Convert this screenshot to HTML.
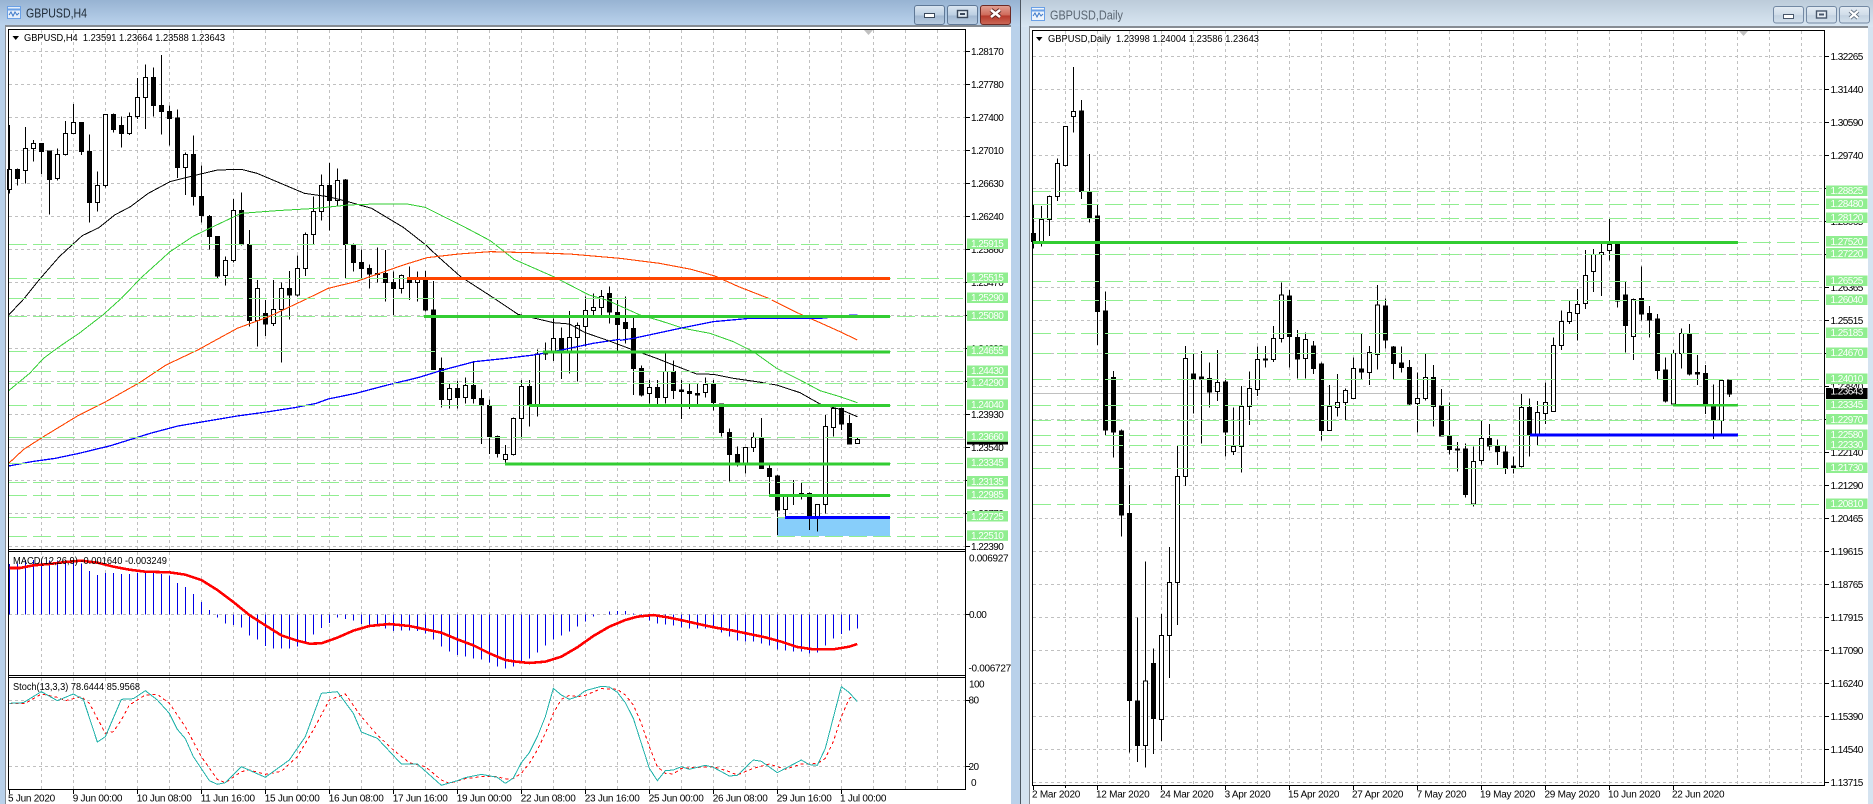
<!DOCTYPE html>
<html><head><meta charset="utf-8"><title>GBPUSD</title>
<style>
html,body{margin:0;padding:0;background:#fff;overflow:hidden}
svg{display:block;font-family:"Liberation Sans",sans-serif}
path,polyline,line{vector-effect:non-scaling-stroke}
polyline{fill:none;shape-rendering:crispEdges}
.g{fill:none;stroke:#c0c0c0;stroke-width:1;stroke-dasharray:3 3}
.l{fill:none;stroke:#90ee90;stroke-width:1;stroke-dasharray:18 6}
.w{fill:none;stroke:#000;stroke-width:1;shape-rendering:crispEdges}
.b{fill:#000;stroke:#000;stroke-width:1;shape-rendering:crispEdges}
.h{fill:#fff;stroke:#000;stroke-width:1;shape-rendering:crispEdges}
.a text,text.a{font-size:10px;letter-spacing:-.55px;fill:#000}
.n text{font-size:10px;letter-spacing:-.55px;fill:#fff}
.d text{font-size:10px;fill:#000}
.gl rect{fill:#90ee90}
text{white-space:pre}
</style></head><body>
<svg width="1873" height="804" viewBox="0 0 1873 804" xmlns="http://www.w3.org/2000/svg">
<defs>
<linearGradient id="t1" x1="0" y1="0" x2="0" y2="1"><stop offset="0" stop-color="#97b3d2"/><stop offset="1" stop-color="#bbd3ec"/></linearGradient>
<linearGradient id="t2" x1="0" y1="0" x2="0" y2="1"><stop offset="0" stop-color="#bccbda"/><stop offset="1" stop-color="#d9e6f2"/></linearGradient>
<linearGradient id="bt" x1="0" y1="0" x2="0" y2="1"><stop offset="0" stop-color="#dbe6f1"/><stop offset=".5" stop-color="#bccfe3"/><stop offset=".55" stop-color="#a3b9d2"/><stop offset="1" stop-color="#b9cde2"/></linearGradient>
<linearGradient id="bi" x1="0" y1="0" x2="0" y2="1"><stop offset="0" stop-color="#e4ecf4"/><stop offset=".5" stop-color="#d0dde9"/><stop offset=".55" stop-color="#c3d2e1"/><stop offset="1" stop-color="#d3e0ec"/></linearGradient>
<linearGradient id="bc" x1="0" y1="0" x2="0" y2="1"><stop offset="0" stop-color="#e2a295"/><stop offset=".5" stop-color="#cf6a5a"/><stop offset=".55" stop-color="#b73a2c"/><stop offset="1" stop-color="#cc6a58"/></linearGradient>
</defs>

<!-- window frames -->
<rect x="0" y="0" width="1020" height="804" fill="#b9d1ea"/>
<rect x="0" y="0" width="1020" height="26" fill="url(#t1)"/>
<rect x="1021" y="0" width="852" height="804" fill="#d5e3f0"/>
<rect x="1021" y="0" width="852" height="27" fill="url(#t2)"/>
<rect x="1020" y="0" width="1" height="804" fill="#4d5660"/>
<rect x="6" y="27" width="1005" height="777" fill="#fff"/>
<rect x="1030" y="28" width="838" height="776" fill="#fff"/>
<rect x="5" y="25" width="1006" height="2" fill="#868c93"/>
<rect x="5" y="25" width="1" height="779" fill="#868c93"/>
<rect x="1029" y="26" width="839" height="2" fill="#868c93"/>
<rect x="1029" y="26" width="1" height="778" fill="#868c93"/>

<!-- titles -->
<g>
<rect x="7.5" y="6.5" width="13" height="12" fill="#e6effa" stroke="#6aa0e6"/>
<path d="M8 9.5H20" stroke="#6aa0e6" fill="none" stroke-width="2"/>
<path d="M9 15l2-3 2 4 2-4 2 3 2-2" stroke="#3c78c8" fill="none"/>
<text x="26" y="17.5" font-size="13" fill="#1e2a36" textLength="61" lengthAdjust="spacingAndGlyphs">GBPUSD,H4</text>
<rect x="1031.5" y="7.5" width="13" height="13" fill="#eef4fb" stroke="#6aa0e6"/>
<path d="M1032 10.5H1044" stroke="#6aa0e6" fill="none" stroke-width="2"/>
<path d="M1033 16l2-3 2 4 2-4 2 3 2-2" stroke="#3c78c8" fill="none"/>
<text x="1050" y="19.5" font-size="13" fill="#5a6672" textLength="73" lengthAdjust="spacingAndGlyphs">GBPUSD,Daily</text>
</g>

<!-- buttons -->
<rect x="914.5" y="5.5" width="30" height="19" rx="2.5" fill="url(#bt)" stroke="#5f7896"/>
<rect x="924.5" y="13.5" width="10" height="4" fill="#fff" stroke="#39475a"/>
<rect x="947.5" y="5.5" width="30" height="19" rx="2.5" fill="url(#bt)" stroke="#5f7896"/>
<rect x="957.5" y="10.5" width="10" height="7" fill="#dfe8f1" stroke="#39475a" stroke-width="1.4"/>
<rect x="960" y="13" width="5" height="2" fill="#39475a"/>
<rect x="980.5" y="5.5" width="30" height="19" rx="2.5" fill="url(#bc)" stroke="#6d2a25"/>
<path d="M991 10l9 7M1000 10l-9 7" stroke="#5b2320" stroke-width="4.5" fill="none"/>
<path d="M991 10l9 7M1000 10l-9 7" stroke="#fff" stroke-width="2.6" fill="none"/>

<rect x="1773.5" y="6.5" width="30" height="16.5" rx="2.5" fill="url(#bi)" stroke="#7288a3"/>
<rect x="1783.5" y="14.5" width="10" height="4" fill="#fff" stroke="#47566a"/>
<rect x="1806.5" y="6.5" width="30" height="16.5" rx="2.5" fill="url(#bi)" stroke="#7288a3"/>
<rect x="1816.5" y="11" width="10" height="7" fill="#e8eef5" stroke="#47566a" stroke-width="1.4"/>
<rect x="1819" y="13.5" width="5" height="2" fill="#47566a"/>
<rect x="1839.5" y="6.5" width="30" height="16.5" rx="2.5" fill="url(#bi)" stroke="#7288a3"/>
<path d="M1850 11l8 7M1858 11l-8 7" stroke="#5d6b7c" stroke-width="4" fill="none"/>
<path d="M1850 11l8 7M1858 11l-8 7" stroke="#fff" stroke-width="2.2" fill="none"/>

<!-- LEFT grid -->
<path class="g" d="M41.5 30V789M73.5 30V789M105.5 30V789M137.5 30V789M169.5 30V789M201.5 30V789M233.5 30V789M265.5 30V789M297.5 30V789M329.5 30V789M361.5 30V789M393.5 30V789M425.5 30V789M457.5 30V789M489.5 30V789M521.5 30V789M553.5 30V789M585.5 30V789M617.5 30V789M649.5 30V789M681.5 30V789M713.5 30V789M745.5 30V789M777.5 30V789M809.5 30V789M841.5 30V789M873.5 30V789M905.5 30V789M937.5 30V789"/>
<path class="g" d="M9 51.5H965M9 84.5H965M9 117.5H965M9 150.5H965M9 183.5H965M9 216.5H965M9 249.5H965M9 282.5H965M9 315.5H965M9 348.5H965M9 381.5H965M9 414.5H965M9 447.5H965M9 480.5H965M9 513.5H965M9 546.5H965M9 614.5H965M9 700.5H965M9 766.5H965"/>
<path d="M9 439.5H965" stroke="#c0c0c0" fill="none"/>
<rect x="777.5" y="517" width="112.500" height="19" fill="#87cefa"/>

<!-- LEFT candles -->
<g transform="translate(9.5,0) scale(8,.33333)">
<path class="w" d="M0 375V580M1 505V557M2 381V551M3 420V485M4 430V522M5 453V644M6 445V542M7 363V467M8 312V402M9 367V465M10 403V668M11 514V635M12 342V563M13 340V398M14 350V443M15 338V405M16 234V357M17 193V387M18 202V350M19 165V404M20 316V437M21 328V534M22 458V585M23 406V617M24 497V668M25 645V748M26 708V835M27 770V857M28 597V788M29 577V737M30 690V980M31 840V1040M32 900V1008M33 840V978M34 848V1088M35 813V958M36 767V890M37 697V828M38 590V732M39 523V662M40 489V692M41 505V620M42 537V835M43 730V815M44 748V835M45 793V865M46 742V848M47 750V905M48 815V945M49 823V880M50 800V900M51 815V905M52 813V935M53 843V1110M54 1072V1223M55 1150V1225M56 1143V1225M57 1132V1210M58 1083V1210M59 1168V1332M60 1198V1362M61 1307V1372M62 1335V1392M63 1252V1366M64 1140V1315M65 1140V1280M66 1048V1250M67 1028V1080M68 955V1083M69 982V1137M70 933V1120M71 967V1145M72 890V1040M73 880V945M74 870V945M75 860V970M76 900V1052M77 890V1030M78 945V1185M79 1097V1190M80 1140V1210M81 1140V1212M82 1058V1210M83 1082V1197M84 1140V1257M85 1152V1227M86 1150V1212M87 1132V1192M88 1140V1232M89 1210V1310M90 1285V1445M91 1340V1400M92 1342V1420M93 1297V1356M94 1254V1406M95 1390V1485M96 1425V1605M97 1490V1552M98 1440V1515M99 1448V1498M100 1478V1590M101 1514V1595M102 1245V1540M103 1220V1310M104 1222V1290M105 1245V1334M106 1314V1332"/>
</g>
<g transform="translate(7.5,0) scale(8,.33333)">
<path class="b" d="M1 508h.5V535h-.5zM4 430h.5V455h-.5zM5 453h.5V539h-.5zM9 367h.5V455h-.5zM10 454h.5V608h-.5zM13 343h.5V389h-.5zM14 376h.5V401h-.5zM18 232h.5V317h-.5zM19 316h.5V335h-.5zM20 334h.5V356h-.5zM21 354h.5V503h-.5zM23 464h.5V589h-.5zM24 589h.5V647h-.5zM25 649h.5V710h-.5zM26 709h.5V828h-.5zM29 631h.5V732h-.5zM30 733h.5V962h-.5zM32 940h.5V972h-.5zM35 865h.5V885h-.5zM40 556h.5V602h-.5zM42 540h.5V733h-.5zM43 735h.5V788h-.5zM44 787h.5V806h-.5zM45 805h.5V822h-.5zM46 820h.5V823h-.5zM47 820h.5V848h-.5zM48 847h.5V866h-.5zM50 832h.5V848h-.5zM52 840h.5V930h-.5zM53 930h.5V1108h-.5zM54 1105h.5V1198h-.5zM56 1165h.5V1193h-.5zM58 1156h.5V1195h-.5zM59 1195h.5V1215h-.5zM60 1217h.5V1310h-.5zM61 1310h.5V1360h-.5zM65 1159h.5V1215h-.5zM67 1055h.5V1062h-.5zM69 1015h.5V1053h-.5zM75 880h.5V936h-.5zM76 937h.5V974h-.5zM77 968h.5V986h-.5zM78 985h.5V1105h-.5zM79 1105h.5V1185h-.5zM81 1162h.5V1192h-.5zM83 1115h.5V1172h-.5zM84 1170h.5V1175h-.5zM85 1174h.5V1181h-.5zM86 1181h.5V1185h-.5zM88 1153h.5V1207h-.5zM89 1212h.5V1298h-.5zM90 1297h.5V1364h-.5zM91 1363h.5V1389h-.5zM94 1314h.5V1406h-.5zM95 1405h.5V1430h-.5zM96 1428h.5V1530h-.5zM98 1485h.5V1490h-.5zM99 1480h.5V1483h-.5zM100 1480h.5V1555h-.5zM104 1225h.5V1272h-.5zM105 1270h.5V1332h-.5z"/>
<path class="h" d="M0 508h.5V568h-.5zM2 446h.5V511h-.5zM3 431h.5V445h-.5zM6 463h.5V536h-.5zM7 401h.5V463h-.5zM8 367h.5V400h-.5zM11 556h.5V607h-.5zM12 343h.5V556h-.5zM15 349h.5V400h-.5zM16 292h.5V349h-.5zM17 232h.5V292h-.5zM22 464h.5V502h-.5zM27 781h.5V827h-.5zM28 631h.5V781h-.5zM31 865h.5V962h-.5zM33 928h.5V970h-.5zM34 865h.5V928h-.5zM36 805h.5V885h-.5zM37 703h.5V805h-.5zM38 634h.5V703h-.5zM39 556h.5V634h-.5zM41 541h.5V601h-.5zM49 827h.5V866h-.5zM51 835h.5V848h-.5zM55 1165h.5V1198h-.5zM57 1156h.5V1193h-.5zM62 1363h.5V1378h-.5zM63 1255h.5V1363h-.5zM64 1159h.5V1255h-.5zM66 1062h.5V1215h-.5zM68 1015h.5V1055h-.5zM70 1012h.5V1053h-.5zM71 976h.5V1012h-.5zM72 931h.5V980h-.5zM73 922h.5V932h-.5zM74 890h.5V922h-.5zM80 1162h.5V1180h-.5zM82 1115h.5V1192h-.5zM87 1153h.5V1178h-.5zM92 1342h.5V1390h-.5zM93 1312h.5V1342h-.5zM97 1490h.5V1528h-.5zM101 1514h.5V1550h-.5zM102 1280h.5V1513h-.5zM103 1225h.5V1282h-.5zM106 1318h.5V1330h-.5z"/>
</g>

<!-- LEFT moving averages -->
<g transform="scale(.3954,.33333)">
<polyline stroke="#000" stroke-width="1" points="22,945 60,897 100,838 150,770 208,707 250,683 290,645 330,620 375,580 430,545 490,527 550,510 610,508 650,520 700,545 770,580 830,590 880,605 940,625 1020,682 1075,733 1110,772 1165,830 1250,895 1310,943 1400,968 1440,972 1480,998 1534,1020"/>
<polyline stroke="#32cd32" stroke-width="1" points="22,1172 75,1120 110,1075 150,1040 200,1000 260,945 305,897 360,830 430,755 490,708 530,685 610,640 700,632 800,625 880,615 950,612 1030,612 1075,622 1170,678 1240,722 1300,778 1400,830 1490,885 1534,900"/>
<polyline stroke="#ff4500" stroke-width="1.1" points="22,1390 60,1348 110,1310 200,1245 260,1210 350,1150 420,1095 500,1050 600,985 680,950 775,897 830,865 900,845 960,820 1020,795 1080,773 1160,762 1240,755 1340,758 1440,762 1568,775 1668,790 1748,808 1808,828 1868,860 1948,897"/>
<polyline stroke="#0000ff" stroke-width="1.3" points="22,1398 80,1385 140,1375 200,1360 280,1337 380,1300 450,1278 530,1262 600,1248 680,1235 750,1222 800,1210 830,1197 900,1180 980,1155 1060,1132 1120,1110 1200,1085 1280,1075 1350,1065 1420,1050 1500,1030 1568,1018"/>
</g>
<g transform="translate(500,300) scale(.33333)">
<polyline stroke="#000" stroke-width="1" points="320,120 400,150 470,175 520,195 590,222 640,223 700,235 770,245 830,255 900,278 960,312 1020,328 1072,350"/>
<polyline stroke="#32cd32" stroke-width="1" points="320,0 420,45 480,62 550,85 630,100 700,125 760,155 830,205 900,240 960,272 1020,290 1072,308"/>
<polyline stroke="#ff4500" stroke-width="1.1" points="815,0 900,42 960,68 1020,95 1072,120"/>
<polyline stroke="#0000ff" stroke-width="1.3" points="360,121 400,115 540,85 640,65 750,55 960,55 1060,45 1072,45"/>
</g>

<!-- LEFT levels -->
<path class="l" d="M9 244.500H963M9 278.500H963M9 298.500H963M9 316.500H963M9 351.500H963M9 371.500H963M9 383.500H963M9 405.500H963M9 437.500H963M9 463.500H963M9 482.500H963M9 495.500H963M9 517.500H963M9 536.500H963"/>
<rect x="407" y="277" width="483" height="3" fill="#ff4500"/>
<rect x="424" y="315" width="466" height="3" fill="#32cd32"/>
<rect x="543" y="350.500" width="347" height="3" fill="#32cd32"/>
<rect x="529" y="404" width="361" height="3" fill="#32cd32"/>
<rect x="505" y="462.500" width="385" height="3" fill="#32cd32"/>
<rect x="769" y="494" width="121" height="3" fill="#32cd32"/>
<rect x="785" y="516" width="105" height="3" fill="#0000ff"/>

<!-- LEFT indicators -->
<g transform="translate(9.5,540) scale(8,.33333)" >
<path fill="none" stroke="#0000e6" shape-rendering="crispEdges" d="M0 223V72M1 223V70M2 223V60M3 223V60M4 223V65M5 223V62M6 223V62M7 223V62M8 223V62M9 223V70M10 223V93M11 223V105M12 223V99M13 223V99M14 223V102M15 223V102M16 223V99M17 223V97M18 223V99M19 223V102M20 223V107M21 223V129M22 223V141M23 223V162M24 223V186M25 223V210M26 223V233M27 223V251M28 223V255M29 223V263M30 223V287M31 223V299M32 223V318M33 223V326M34 223V326M35 223V326M36 223V320M37 223V304M38 223V284M39 223V264M40 223V249M41 223V233M42 223V237M43 223V242M44 223V252M45 223V256M46 223V258M47 223V266M48 223V273M49 223V272M50 223V272M51 223V273M52 223V280M53 223V299M54 223V320M55 223V335M56 223V345M57 223V350M58 223V355M59 223V359M60 223V368M61 223V380M62 223V386M63 223V380M64 223V368M65 223V356M66 223V338M67 223V317M68 223V299M69 223V287M70 223V275M71 223V260M72 223V245M73 223V230M74 223V224M75 223V215M76 223V213M77 223V213M78 223V221M79 223V228M80 223V242M81 223V250M82 223V254M83 223V257M84 223V263M85 223V266M86 223V266M87 223V266M88 223V266M89 223V277M90 223V290M91 223V302M92 223V305M93 223V305M94 223V311M95 223V317M96 223V329M97 223V332M98 223V335M99 223V335M100 223V341M101 223V338M102 223V317M103 223V296M104 223V282M105 223V272M106 223V266"/>
</g>
<g transform="translate(0,540) scale(.33333)">
<polyline stroke="#ff0000" stroke-width="2.6" points="28,84 60,84 100,76 148,72 196,66 244,62 292,68 340,80 388,89 436,95 508,97 556,104 604,120 652,150 700,186 748,225 796,256 844,286 892,302 928,311 964,310 1012,293 1060,272 1108,258 1168,252 1228,258 1276,268 1324,278 1372,298 1420,316 1468,340 1516,360"/>
<polyline stroke="#ff0000" stroke-width="1" stroke-dasharray="3 3" points="28,491 76,490 124,462 172,472 196,482 244,470 268,490 316,580 340,575 364,540 388,495 436,465 472,463 508,490 556,560 604,650 652,718 676,728 724,695 748,690 796,703 844,694 892,650 940,570 988,480 1036,462 1084,530 1132,585 1180,630 1228,668 1276,680 1324,720 1348,730 1396,716 1444,710 1492,710 1516,717"/>
<polyline stroke="#20b2aa" stroke-width="1" points="28,490 70,488 124,455 172,482 220,462 250,478 292,606 316,590 364,478 400,476 436,452 472,480 508,520 532,568 556,596 580,650 628,722 652,733 676,728 724,680 796,712 868,660 916,590 964,460 1012,455 1060,520 1084,576 1132,595 1204,672 1252,672 1324,736 1372,722 1396,713 1444,703 1492,712 1516,730"/>
</g>
<g transform="translate(500,540) scale(.33333)">
<polyline stroke="#ff0000" stroke-width="2.6" points="16,360 40,364 88,369 136,365 184,350 232,322 280,288 328,260 376,240 412,230 460,225 508,233 556,243 604,254 652,264 700,272 748,282 796,292 844,305 892,321 940,328 1000,328 1048,320 1072,312"/>
<polyline stroke="#ff0000" stroke-width="1" stroke-dasharray="3 3" points="16,717 40,715 64,700 88,670 112,630 136,580 160,520 184,478 208,466 232,470 256,466 304,446 352,448 376,465 400,495 424,550 448,620 472,680 496,700 520,702 544,685 592,682 640,680 688,695 712,705 760,685 808,672 856,688 904,672 952,671 976,655 1000,605 1024,530 1048,475 1060,468"/>
<polyline stroke="#20b2aa" stroke-width="1" points="16,730 40,714 64,668 88,638 112,590 136,530 160,445 184,465 208,478 232,470 256,452 304,439 328,441 352,457 376,488 400,535 424,610 448,685 472,722 496,692 520,690 544,680 568,688 616,676 640,682 688,708 712,706 760,660 784,664 832,698 904,660 928,674 952,676 976,625 1024,440 1048,458 1072,485"/>
</g>

<!-- LEFT frame lines -->
<path fill="none" stroke="#000" d="M8.500 29.500H965.500V789.500H8.500ZM8.500 549.500H965.500M8.500 551.500H965.500M8.500 675.500H965.500M8.500 677.500H965.500"/>
<path fill="none" stroke="#000" d="M966 51.500h4M966 84.500h4M966 117.500h4M966 150.500h4M966 183.500h4M966 216.500h4M966 249.500h4M966 282.500h4M966 315.500h4M966 348.500h4M966 381.500h4M966 414.500h4M966 447.500h4M966 480.500h4M966 513.500h4M966 546.500h4M966 614.500h4M966 700.500h4M966 766.500h4M9.500 790v4M73.500 790v4M137.500 790v4M201.500 790v4M265.500 790v4M329.500 790v4M393.500 790v4M457.500 790v4M521.500 790v4M585.500 790v4M649.500 790v4M713.500 790v4M777.500 790v4M841.500 790v4"/>
<path d="M864 30h9l-4.500 5z" fill="#c0c0c0"/>
<path d="M12.500 36h6.500l-3.250 4z" fill="#000"/>
<text x="24" y="41" font-size="10" fill="#000" textLength="201" lengthAdjust="spacingAndGlyphs">GBPUSD,H4  1.23591 1.23664 1.23588 1.23643</text>
<text x="13" y="564" font-size="10" fill="#000" textLength="154" lengthAdjust="spacingAndGlyphs">MACD(12,26,9) -0.001640 -0.003249</text>
<text x="13" y="690" font-size="10" fill="#000" textLength="127" lengthAdjust="spacingAndGlyphs">Stoch(13,3,3) 78.6444 85.9568</text>

<!-- LEFT axis -->
<g class="a">
<text x="971" y="55">1.28170</text><text x="971" y="88">1.27780</text><text x="971" y="121">1.27400</text><text x="971" y="154">1.27010</text><text x="971" y="187">1.26630</text><text x="971" y="220">1.26240</text><text x="971" y="253">1.25860</text><text x="971" y="286">1.25470</text><text x="971" y="352">1.24690</text><text x="971" y="418">1.23930</text><text x="971" y="451">1.23540</text><text x="971" y="517">1.22770</text><text x="971" y="550">1.22390</text>
<text x="969" y="561.500" style="letter-spacing:-.3px">0.006927</text><text x="969" y="618">0.00</text><text x="968.500" y="671.500" style="letter-spacing:-.3px">-0.006727</text>
<text x="969" y="687.500">100</text><text x="968.500" y="703.500">80</text><text x="968.500" y="770">20</text><text x="971" y="786">0</text>
</g>
<rect x="967" y="434" width="41" height="10.500" fill="#000"/>
<g class="gl">
<rect x="967" y="238.500" width="41" height="10.500"/><rect x="967" y="272.500" width="41" height="10.500"/><rect x="967" y="292.500" width="41" height="10.500"/><rect x="967" y="310.500" width="41" height="10.500"/><rect x="967" y="345.700" width="41" height="10.500"/><rect x="967" y="365.500" width="41" height="10.500"/><rect x="967" y="377.500" width="41" height="10.500"/><rect x="967" y="399.500" width="41" height="10.500"/><rect x="967" y="431.300" width="41" height="10.500"/><rect x="967" y="457.700" width="41" height="10.500"/><rect x="967" y="476" width="41" height="10.500"/><rect x="967" y="489" width="41" height="10.500"/><rect x="967" y="511" width="41" height="10.500"/><rect x="967" y="530.300" width="41" height="10.500"/>
</g>
<g class="n">
<text x="971" y="247">1.25915</text><text x="971" y="281">1.25515</text><text x="971" y="301">1.25290</text><text x="971" y="319">1.25080</text><text x="971" y="354">1.24655</text><text x="971" y="374">1.24430</text><text x="971" y="386">1.24290</text><text x="971" y="408">1.24040</text><text x="971" y="440">1.23660</text><text x="971" y="466">1.23345</text><text x="971" y="485">1.23135</text><text x="971" y="498">1.22985</text><text x="971" y="520">1.22725</text><text x="971" y="539">1.22510</text>
</g>
<g class="d" style="letter-spacing:-.25px">
<text x="8" y="801.500">5 Jun 2020</text><text x="72.700" y="801.500">9 Jun 00:00</text><text x="136.700" y="801.500">10 Jun 08:00</text><text x="200.700" y="801.500">11 Jun 16:00</text><text x="264.700" y="801.500">15 Jun 00:00</text><text x="328.700" y="801.500">16 Jun 08:00</text><text x="392.700" y="801.500">17 Jun 16:00</text><text x="456.700" y="801.500">19 Jun 00:00</text><text x="520.700" y="801.500">22 Jun 08:00</text><text x="584.700" y="801.500">23 Jun 16:00</text><text x="648.700" y="801.500">25 Jun 00:00</text><text x="712.700" y="801.500">26 Jun 08:00</text><text x="776.700" y="801.500">29 Jun 16:00</text><text x="840" y="801.500">1 Jul 00:00</text>
</g>

<!-- RIGHT grid -->
<path class="g" d="M1065.500 31V786M1097.500 31V786M1129.500 31V786M1161.500 31V786M1193.500 31V786M1225.500 31V786M1257.500 31V786M1289.500 31V786M1321.500 31V786M1353.500 31V786M1385.500 31V786M1417.500 31V786M1449.500 31V786M1481.500 31V786M1513.500 31V786M1545.500 31V786M1577.500 31V786M1609.500 31V786M1641.500 31V786M1673.500 31V786M1705.500 31V786M1737.500 31V786M1769.500 31V786M1801.500 31V786"/>
<path class="g" d="M1033 56.500H1824M1033 89.500H1824M1033 122.500H1824M1033 155.500H1824M1033 188.500H1824M1033 221.500H1824M1033 254.500H1824M1033 287.500H1824M1033 320.500H1824M1033 353.500H1824M1033 386.500H1824M1033 419.500H1824M1033 452.500H1824M1033 485.500H1824M1033 518.500H1824M1033 551.500H1824M1033 584.500H1824M1033 617.500H1824M1033 650.500H1824M1033 683.500H1824M1033 716.500H1824M1033 749.500H1824M1033 782.500H1824"/>
<path d="M1033 393.500H1824" stroke="#c0c0c0" fill="none"/>

<!-- RIGHT candles -->
<g transform="translate(1033.5,0) scale(8,.33333)">
<path class="w" d="M0 615V745M1 618V740M2 587V708M3 475V603M4 379V500M5 201V398M6 300V597M7 462V668M8 615V1035M9 875V1305M10 1113V1373M11 1288V1610M12 1455V2258M13 1852V2286M14 1685V2303M15 1945V2262M16 1842V2223M17 1641V2034M18 1337V1875M19 1038V1458M20 1060V1240M21 1053V1330M22 1088V1223M23 1050V1203M24 1135V1370M25 1223V1365M26 1158V1418M27 1115V1275M28 1040V1188M29 1038V1103M30 978V1086M31 848V1028M32 870V1103M33 990V1135M34 997V1135M35 1023V1122M36 1088V1322M37 1155V1292M38 1122V1250M39 1166V1260M40 1073V1196M41 1000V1137M42 1038V1155M43 855V1108M44 895V1045M45 1038V1137M46 1040V1118M47 1080V1215M48 1118V1298M49 1060V1202M50 1095V1280M51 1167V1310M52 1208V1363M53 1326V1415M54 1330V1493M55 1340V1520M56 1262V1394M57 1272V1352M58 1318V1395M59 1338V1422M60 1370V1420M61 1182V1403M62 1195V1370M63 1203V1336M64 1147V1272M65 1013V1235M66 932V1050M67 900V972M68 867V1022M69 750V927M70 747V876M71 732V888M72 657V782M73 732V923M74 845V1057M75 895V1080M76 800V962M77 918V1013M78 942V1137M79 1073V1208M80 1050V1215M81 985V1105M82 972V1126M83 1065V1155M84 1095V1242M85 1153V1317M86 1141V1302M87 1140V1191"/>
</g>
<g transform="translate(1031.5,0) scale(8,.33333)">
<path class="b" d="M0 700h.5V725h-.5zM6 333h.5V575h-.5zM7 575h.5V652h-.5zM8 648h.5V935h-.5zM9 933h.5V1290h-.5zM10 1132h.5V1296h-.5zM11 1293h.5V1545h-.5zM12 1540h.5V2102h-.5zM13 2103h.5V2237h-.5zM15 1990h.5V2155h-.5zM20 1122h.5V1137h-.5zM21 1131h.5V1137h-.5zM22 1135h.5V1176h-.5zM24 1146h.5V1296h-.5zM29 1077h.5V1080h-.5zM32 888h.5V1010h-.5zM33 1012h.5V1077h-.5zM35 1038h.5V1106h-.5zM36 1092h.5V1292h-.5zM41 1107h.5V1116h-.5zM44 918h.5V1020h-.5zM45 1041h.5V1091h-.5zM46 1089h.5V1103h-.5zM47 1102h.5V1212h-.5zM50 1132h.5V1220h-.5zM51 1218h.5V1308h-.5zM52 1308h.5V1349h-.5zM53 1347h.5V1350h-.5zM54 1347h.5V1484h-.5zM57 1315h.5V1338h-.5zM58 1338h.5V1355h-.5zM59 1356h.5V1405h-.5zM60 1398h.5V1403h-.5zM62 1222h.5V1305h-.5zM73 732h.5V903h-.5zM74 885h.5V977h-.5zM76 895h.5V942h-.5zM77 940h.5V960h-.5zM78 957h.5V1112h-.5zM79 1110h.5V1203h-.5zM82 1002h.5V1122h-.5zM83 1118h.5V1122h-.5zM84 1120h.5V1213h-.5zM85 1215h.5V1260h-.5zM87 1140h.5V1182h-.5z"/>
<path class="h" d="M1 658h.5V725h-.5zM2 590h.5V658h-.5zM3 490h.5V590h-.5zM4 379h.5V497h-.5zM5 334h.5V350h-.5zM14 2043h.5V2237h-.5zM16 1907h.5V2158h-.5zM17 1747h.5V1907h-.5zM18 1429h.5V1748h-.5zM19 1075h.5V1430h-.5zM23 1147h.5V1175h-.5zM25 1340h.5V1355h-.5zM26 1219h.5V1339h-.5zM27 1165h.5V1220h-.5zM28 1078h.5V1169h-.5zM30 1015h.5V1079h-.5zM31 885h.5V1016h-.5zM34 1018h.5V1076h-.5zM37 1219h.5V1291h-.5zM38 1207h.5V1222h-.5zM39 1171h.5V1207h-.5zM40 1105h.5V1196h-.5zM42 1057h.5V1118h-.5zM43 915h.5V1063h-.5zM48 1196h.5V1210h-.5zM49 1132h.5V1196h-.5zM55 1384h.5V1512h-.5zM56 1315h.5V1382h-.5zM61 1222h.5V1400h-.5zM63 1237h.5V1305h-.5zM64 1207h.5V1240h-.5zM65 1036h.5V1235h-.5zM66 964h.5V1037h-.5zM67 937h.5V965h-.5zM68 913h.5V940h-.5zM69 826h.5V910h-.5zM70 764h.5V815h-.5zM71 757h.5V763h-.5zM72 733h.5V752h-.5zM75 898h.5V1010h-.5zM80 1060h.5V1212h-.5zM81 1000h.5V1060h-.5zM86 1141h.5V1262h-.5z"/>
</g>

<!-- RIGHT levels -->
<path class="l" d="M1033 191.500H1820M1033 204.500H1820M1033 218.500H1820M1033 242.500H1820M1033 254.500H1820M1033 281.500H1820M1033 300.500H1820M1033 333.500H1820M1033 353.500H1820M1033 379.500H1820M1033 405.500H1820M1033 420.500H1820M1033 435.500H1820M1033 445.500H1820M1033 468.500H1820M1033 504.500H1820"/>
<rect x="1033" y="241" width="705" height="3" fill="#32cd32"/>
<rect x="1673" y="404" width="65" height="2.500" fill="#32cd32"/>
<rect x="1530" y="433.500" width="208" height="3" fill="#0000ff"/>

<!-- RIGHT frame -->
<path fill="none" stroke="#000" d="M1032.500 30.500H1824.500V785.500H1032.500Z"/>
<path fill="none" stroke="#000" d="M1825 56.500h4M1825 89.500h4M1825 122.500h4M1825 155.500h4M1825 188.500h4M1825 221.500h4M1825 254.500h4M1825 287.500h4M1825 320.500h4M1825 353.500h4M1825 386.500h4M1825 419.500h4M1825 452.500h4M1825 485.500h4M1825 518.500h4M1825 551.500h4M1825 584.500h4M1825 617.500h4M1825 650.500h4M1825 683.500h4M1825 716.500h4M1825 749.500h4M1825 782.500h4M1033.500 786v4M1065.500 786v2M1097.500 786v4M1161.500 786v4M1225.500 786v4M1289.500 786v4M1353.500 786v4M1417.500 786v4M1481.500 786v4M1545.500 786v4M1609.500 786v4M1673.500 786v4"/>
<path d="M1739 31h9l-4.500 5z" fill="#c0c0c0"/>
<path d="M1036 37h6.500l-3.250 4z" fill="#000"/>
<text x="1048" y="42" font-size="10" fill="#000" textLength="211" lengthAdjust="spacingAndGlyphs">GBPUSD,Daily  1.23998 1.24004 1.23586 1.23643</text>

<!-- RIGHT axis -->
<g class="a">
<text x="1830.500" y="60">1.32265</text><text x="1830.500" y="93">1.31440</text><text x="1830.500" y="126">1.30590</text><text x="1830.500" y="159">1.29740</text><text x="1830.500" y="225">1.28065</text><text x="1830.500" y="291">1.26365</text><text x="1830.500" y="324">1.25515</text><text x="1830.500" y="390">1.23840</text><text x="1830.500" y="456">1.22140</text><text x="1830.500" y="489">1.21290</text><text x="1830.500" y="522">1.20465</text><text x="1830.500" y="555">1.19615</text><text x="1830.500" y="588">1.18765</text><text x="1830.500" y="621">1.17915</text><text x="1830.500" y="654">1.17090</text><text x="1830.500" y="687">1.16240</text><text x="1830.500" y="720">1.15390</text><text x="1830.500" y="753">1.14540</text><text x="1830.500" y="786">1.13715</text>
</g>
<rect x="1826" y="388" width="41.500" height="11" fill="#000"/>
<g class="gl">
<rect x="1826" y="185.500" width="41.500" height="10.500"/><rect x="1826" y="198.500" width="41.500" height="10.500"/><rect x="1826" y="212.500" width="41.500" height="10.500"/><rect x="1826" y="236" width="41.500" height="10.500"/><rect x="1826" y="248" width="41.500" height="10.500"/><rect x="1826" y="275.500" width="41.500" height="10.500"/><rect x="1826" y="294.500" width="41.500" height="10.500"/><rect x="1826" y="327.500" width="41.500" height="10.500"/><rect x="1826" y="347.500" width="41.500" height="10.500"/><rect x="1826" y="373.500" width="41.500" height="10.500"/><rect x="1826" y="399.500" width="41.500" height="10.500"/><rect x="1826" y="414" width="41.500" height="10.500"/><rect x="1826" y="429.500" width="41.500" height="10.500"/><rect x="1826" y="439.500" width="41.500" height="10.500"/><rect x="1826" y="462.500" width="41.500" height="10.500"/><rect x="1826" y="498.500" width="41.500" height="10.500"/>
</g>
<g class="n">
<text x="1830.500" y="394.500">1.23643</text>
<text x="1830.500" y="194">1.28825</text><text x="1830.500" y="207">1.28480</text><text x="1830.500" y="221">1.28120</text><text x="1830.500" y="245">1.27520</text><text x="1830.500" y="257">1.27220</text><text x="1830.500" y="284">1.26525</text><text x="1830.500" y="303">1.26040</text><text x="1830.500" y="336">1.25185</text><text x="1830.500" y="356">1.24670</text><text x="1830.500" y="382">1.24010</text><text x="1830.500" y="408">1.23345</text><text x="1830.500" y="423">1.22970</text><text x="1830.500" y="438">1.22580</text><text x="1830.500" y="448">1.22330</text><text x="1830.500" y="471">1.21730</text><text x="1830.500" y="507">1.20810</text>
</g>
<g class="d" style="letter-spacing:-.25px">
<text x="1032" y="797.500">2 Mar 2020</text><text x="1096" y="797.500">12 Mar 2020</text><text x="1160" y="797.500">24 Mar 2020</text><text x="1224.600" y="797.500">3 Apr 2020</text><text x="1288" y="797.500">15 Apr 2020</text><text x="1352" y="797.500">27 Apr 2020</text><text x="1416.600" y="797.500">7 May 2020</text><text x="1480" y="797.500">19 May 2020</text><text x="1544.500" y="797.500">29 May 2020</text><text x="1608" y="797.500">10 Jun 2020</text><text x="1672" y="797.500">22 Jun 2020</text>
</g>
</svg>
</body></html>
